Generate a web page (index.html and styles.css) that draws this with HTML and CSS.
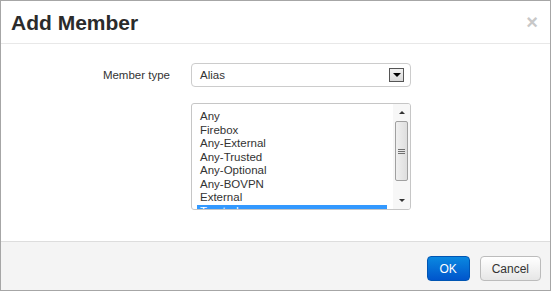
FILE: index.html
```html
<!DOCTYPE html>
<html>
<head>
  <title>Add Member</title>
  <link rel="stylesheet" href="styles.css">
</head>
<body>

<div class="modal">
  <div class="modal-header">
    <h3>Add Member</h3>
    <span class="close">&times;</span>
  </div>

  <div class="modal-body">
    <div class="form-grid">
      <label class="form-label">Member type</label>
      <div class="select-box">
        <span>Alias</span>
        <span class="drop-btn"><span class="tri-down"></span></span>
      </div>

      <div class="listbox">
        <ul class="list-items">
          <li>Any</li>
          <li>Firebox</li>
          <li>Any-External</li>
          <li>Any-Trusted</li>
          <li>Any-Optional</li>
          <li>Any-BOVPN</li>
          <li>External</li>
          <li class="selected">Trusted</li>
        </ul>
        <div class="scrollbar">
          <div class="sb-arrow"><span class="tri-up small"></span></div>
          <div class="sb-track">
            <div class="sb-thumb"><span class="grip"></span></div>
          </div>
          <div class="sb-arrow"><span class="tri-down small"></span></div>
        </div>
      </div>
    </div>
  </div>

  <div class="modal-footer">
    <button class="btn btn-primary">OK</button>
    <button class="btn">Cancel</button>
  </div>
</div>

</body>
</html>
```

FILE: styles.css
```css
body {
  margin: 0;
  font-family: 'Liberation Sans', Arial, sans-serif;
  background: white;
}

.modal {
  width: 551px;
  height: 291px;
  box-sizing: border-box;
  border: 1px solid #a6a6a6;
  display: flex;
  flex-direction: column;
  background: white;
}

.modal-header {
  display: flex;
  justify-content: space-between;
  align-items: flex-start;
  padding: 10px 10px 8px 10px;
  border-bottom: 1px solid #e8e8e8;
}

.modal-header h3 {
  margin: 0;
  font-size: 21px;
  line-height: 24px;
  font-weight: bold;
  color: #2b2b2b;
}

.close {
  font-size: 20px;
  line-height: 16px;
  font-weight: bold;
  color: #c8c8c8;
  margin-top: 3px;
  margin-right: 2px;
}

.modal-body {
  flex: 1;
  padding: 19px 0 0 89px;
}

.form-grid {
  display: grid;
  grid-template-columns: 80px 220px;
  column-gap: 21px;
  row-gap: 16px;
}

.form-label {
  text-align: right;
  font-size: 11.5px;
  color: #333;
  line-height: 24px;
}

.select-box {
  height: 24px;
  box-sizing: border-box;
  border: 1px solid #cccccc;
  border-radius: 4px;
  display: flex;
  align-items: center;
  justify-content: space-between;
  padding: 0 6px 0 8px;
  font-size: 11.5px;
  color: #333;
}

.drop-btn {
  width: 15px;
  height: 14px;
  box-sizing: border-box;
  border: 1px solid #555;
  background: linear-gradient(#f2f2f2, #d9d9d9);
  display: flex;
  align-items: center;
  justify-content: center;
}

.tri-down {
  width: 0;
  height: 0;
  border-left: 4px solid transparent;
  border-right: 4px solid transparent;
  border-top: 4px solid #000;
}

.tri-up {
  width: 0;
  height: 0;
  border-left: 4px solid transparent;
  border-right: 4px solid transparent;
  border-bottom: 4px solid #000;
}

.tri-up.small, .tri-down.small {
  border-left-width: 3px;
  border-right-width: 3px;
  border-color: transparent;
}

.tri-up.small {
  border-bottom: 3px solid #333;
}

.tri-down.small {
  border-top: 3px solid #333;
}

.listbox {
  grid-column: 2;
  height: 107px;
  box-sizing: border-box;
  border: 1px solid #c6c6c6;
  border-radius: 3px;
  display: flex;
  overflow: hidden;
}

.list-items {
  list-style: none;
  margin: 0;
  padding: 6px 0 0 5px;
  width: 190px;
  overflow: hidden;
}

.list-items li {
  font-size: 11.5px;
  line-height: 13.5px;
  padding-left: 3px;
  color: #333;
  white-space: nowrap;
}

.list-items li.selected {
  background: #3399ff;
  color: white;
}

.scrollbar {
  margin-left: auto;
  width: 17px;
  display: flex;
  flex-direction: column;
  background: #f7f7f7;
}

.sb-arrow {
  height: 17px;
  display: flex;
  align-items: center;
  justify-content: center;
}

.sb-track {
  flex: 1;
  padding: 0 2px;
}

.sb-thumb {
  height: 60px;
  box-sizing: border-box;
  border: 1px solid #a0a0a0;
  border-radius: 2px;
  background: linear-gradient(90deg, #f0f0f0, #dedede);
  display: flex;
  align-items: center;
  justify-content: center;
}

.grip {
  width: 7px;
  height: 5px;
  background: repeating-linear-gradient(#707070 0 1px, transparent 1px 2px);
}

.modal-footer {
  display: flex;
  justify-content: flex-end;
  gap: 10px;
  padding: 14px 9px 9px 0;
  background: #f4f4f4;
  border-top: 1px solid #dddddd;
}

.btn {
  height: 25px;
  padding: 0 11px;
  font-family: 'Liberation Sans', Arial, sans-serif;
  font-size: 12px;
  color: #333;
  border: 1px solid #bcbcbc;
  border-radius: 4px;
  background: linear-gradient(#ffffff, #e6e6e6);
}

.btn-primary {
  width: 43px;
  padding: 0;
  color: white;
  border-color: #0055b3;
  background: linear-gradient(#0a88e0, #0055cc);
}
```
